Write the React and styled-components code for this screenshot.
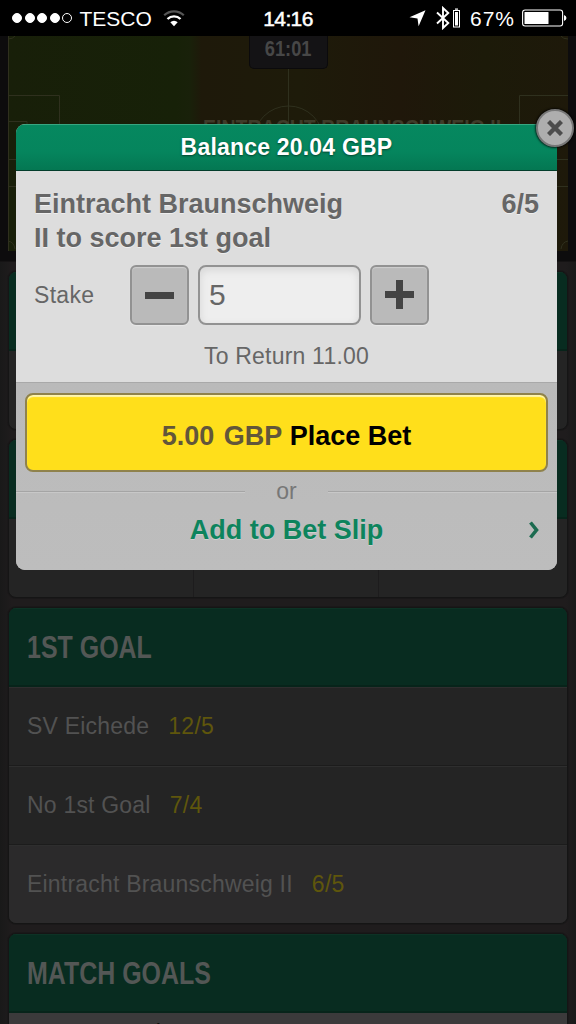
import React from 'react';
import styled, { createGlobalStyle } from 'styled-components';

const Global = createGlobalStyle`
  * { box-sizing: border-box; }
  html, body { margin: 0; padding: 0; background: #1e1c1d; }
  body { font-family: "Liberation Sans", Arial, sans-serif; }
  button, input { font: inherit; margin: 0; }
`;

const Screen = styled.main`
  position: relative;
  width: 576px;
  height: 1024px;
  overflow: hidden;
  background: linear-gradient(90deg, #191919 0, #1f1c1d 12px, #1f1c1d 566px, #191919 576px);
`;

const Label = styled.span`
  display: inline-block;
  white-space: pre;
  letter-spacing: ${p => p.$track || 0}px;
  transform: scaleX(${p => p.$narrow || 1});
  transform-origin: ${p => p.$origin || 'left'} center;
`;

/* ---------- status bar ---------- */

const StatusBar = styled.header`
  display: grid;
  grid-template-columns: 1fr auto 1fr;
  align-items: center;
  height: 36px;
  padding: 0 9px 0 12px;
  background: #000;
  color: #fff;
  font-size: 21px;
  line-height: 36px;
`;

const StatusGroup = styled.div`
  display: flex;
  align-items: center;
  justify-content: ${p => (p.$end ? 'flex-end' : 'flex-start')};
  height: 36px;
`;

const Signal = styled.div`
  display: flex;
  gap: 2.6px;
  margin-right: 7px;
`;

const Dot = styled.i`
  width: 10px;
  height: 10px;
  border-radius: 50%;
  border: 1px solid #fff;
  background: ${p => (p.$on ? '#fff' : 'transparent')};
`;

const Carrier = styled.span`
  padding-top: 2px;
  line-height: 34px;
`;

const Clock = styled.time`
  padding: 2px 3px 0 0;
  line-height: 34px;
  letter-spacing: -0.6px;
  -webkit-text-stroke: 0.5px #fff;
`;

const StatusIcon = styled.svg`
  display: block;
  flex: none;
  margin-left: ${p => p.$gap}px;
`;

const Percent = styled.span`
  margin-left: 10px;
  padding-top: 2px;
  line-height: 34px;
  letter-spacing: 1px;
`;

/* ---------- page behind the dialog ---------- */

const Pitch = styled.section`
  height: 226px;
  padding: 0 8px;
  background: #0d0c0d;
  border-bottom: 1px solid #151314;
`;

const PitchArt = styled.svg`
  display: block;
`;

const MatchClock = styled.div`
  position: absolute;
  top: 36px;
  left: 249px;
  width: 79px;
  height: 33px;
  border: 1px solid #0b0a0c;
  border-top: 0;
  border-radius: 0 0 5px 5px;
  background: #141315;
  color: #474747;
  font-size: 22px;
  font-weight: bold;
  line-height: 26px;
  text-align: center;
`;

const TeamName = styled.div`
  position: absolute;
  top: 115px;
  left: 203px;
  color: #3f3b29;
  font-size: 22px;
  font-weight: bold;
  line-height: 25px;
`;

const Markets = styled.div`
  display: flex;
  flex-direction: column;
  gap: 9px;
  padding: 9px 8px 0;
`;

const Market = styled.section`
  flex: none;
  height: ${p => p.$height}px;
  border: 1px solid #151515;
  border-radius: 8px;
  background: #242424;
  box-shadow: 0 0 0 1px #1a1819;
  overflow: hidden;
`;

const MarketHeader = styled.h2`
  height: 79px;
  margin: 0;
  padding: 0 18px;
  border-top: 1px solid #0d3225;
  border-bottom: 2px solid #07241a;
  background: #082c20;
  color: #535755;
  font-size: 32px;
  font-weight: bold;
  line-height: 77px;
`;

const Selection = styled.div`
  display: flex;
  align-items: center;
  gap: 19px;
  height: 79px;
  padding: 0 18px ${p => (p.$last ? 1 : 0)}px;
  border-top: 1px solid #2e2e2e;
  border-bottom: ${p => (p.$last ? 0 : 1)}px solid #1c1c1c;
  background: ${p => (p.$last ? '#2b2a2b' : '#242424')};
  color: #525252;
  font-size: 23px;
`;

const Odds = styled.span`
  color: #5f560c;
  letter-spacing: 0.3px;
`;

const Columns = styled.div`
  display: grid;
  grid-template-columns: 185px 185px 1fr;
  height: 79px;
`;

const Column = styled.div`
  border-right: 1px solid #1d1c1d;
`;

const GoalsRow = styled.div`
  height: 79px;
  padding: 7px 18px;
  background: #3b3a3b;
  color: #0f0f0f;
  font-size: 23px;
`;

/* ---------- bet dialog ---------- */

const Dialog = styled.div`
  position: absolute;
  top: 124px;
  left: 16px;
  width: 541px;
  height: 446px;
`;

const DialogFrame = styled.div`
  display: flex;
  flex-direction: column;
  height: 100%;
  border-radius: 9px;
  overflow: hidden;
  background: #bbb;
`;

const DialogTitle = styled.h1`
  height: 47px;
  margin: 0;
  border-top: 1px solid #38a681;
  border-bottom: 1px solid #033d2b;
  background: linear-gradient(#06885f 0%, #05855d 60%, #047752 100%);
  color: #fff;
  font-size: 23px;
  font-weight: bold;
  line-height: 44px;
  text-align: center;
  text-shadow: 0 1px 2px rgba(0, 40, 25, 0.7);
`;

const Close = styled.button`
  position: absolute;
  top: -15px;
  right: -17px;
  display: grid;
  place-items: center;
  width: 38px;
  height: 38px;
  padding: 0;
  border: 2px solid #777;
  border-radius: 50%;
  background: #aeaeae;
  box-shadow: 0 0 2px 1px rgba(0, 0, 0, 0.7);
`;

const BetBody = styled.section`
  height: 212px;
  padding: 16px 18px 0;
  background: #ddd;
  border-bottom: 1px solid #a9a9a9;
  color: #666;
`;

const Bet = styled.div`
  display: flex;
  justify-content: space-between;
  height: 78px;
  color: #666;
  font-size: 27px;
  font-weight: bold;
  line-height: 34px;
  text-shadow: 0 1px 0 #eee;
`;

const StakeRow = styled.div`
  display: flex;
  align-items: flex-start;
  gap: 9px;
  height: 60px;
  font-size: 23px;
`;

const StakeLabel = styled.label`
  width: 87px;
  line-height: 60px;
  letter-spacing: 0.3px;
`;

const Step = styled.button`
  display: grid;
  place-items: center;
  width: 59px;
  height: 60px;
  padding: 0;
  border: 2px solid #929292;
  border-radius: 6px;
  background: #bababa;
  box-shadow: inset 0 1px 1px #d0d0d0, 0 1px 1px #e8e8e8;
`;

const StakeInput = styled.input`
  width: 163px;
  height: 60px;
  padding: 0 9px 1px;
  border: 2px solid #929292;
  border-radius: 8px;
  outline: 0;
  background: #eee;
  box-shadow: inset 0 3px 8px rgba(0, 0, 0, 0.1);
  color: #666;
  font-size: 30px;
`;

const Returns = styled.p`
  margin: 17px 0 0;
  font-size: 23px;
  line-height: 28px;
  letter-spacing: 0.2px;
  text-align: center;
`;

const Actions = styled.section`
  flex: 1;
  display: flex;
  flex-direction: column;
  padding-top: 10px;
  background: linear-gradient(#bababa, #bdbdbd);
`;

const PlaceBet = styled.button`
  height: 79px;
  margin: 0 9px;
  padding: 7px 0 0;
  border: 2px solid #8f824c;
  border-radius: 8px;
  background: #ffdf1b;
  box-shadow: inset 0 2px 1px #fff6b0;
  color: #000;
  font-size: 27px;
  font-weight: bold;
  white-space: pre;
`;

const Amount = styled.span`
  color: #62563a;
  word-spacing: 2px;
`;

const Divider = styled.div`
  display: grid;
  grid-template-columns: 229px 1fr 229px;
  align-items: center;
  height: 39px;
  color: #777;
  font-size: 23px;
  text-align: center;
`;

const Line = styled.hr`
  width: 100%;
  margin: 0;
  border: 0;
  border-top: 1px solid #a5a5a5;
  border-bottom: 1px solid #c8c8c8;
`;

const AddToSlip = styled.a`
  display: grid;
  grid-template-columns: 40px 1fr 40px;
  align-items: center;
  height: 38px;
  color: #0d845d;
  font-size: 27px;
  font-weight: bold;
  text-align: center;
  text-shadow: 0 1px 0 #d0d0d0;
`;

const SlipArrow = styled.svg`
  display: block;
  margin-left: 12px;
`;

const PitchDrawing = () => (
  <PitchArt width="560" height="215" viewBox="8 36 560 215">
    <defs>
      <linearGradient id="turf" x1="0" x2="1">
        <stop offset="0" stopColor="#181f09" />
        <stop offset="0.3" stopColor="#172108" />
        <stop offset="0.325" stopColor="#19210a" />
        <stop offset="0.345" stopColor="#1e190a" />
        <stop offset="0.52" stopColor="#1e1b0a" />
        <stop offset="0.7" stopColor="#1f170a" />
        <stop offset="0.85" stopColor="#1c1a09" />
        <stop offset="1" stopColor="#1e190a" />
      </linearGradient>
    </defs>
    <rect x="8" y="36" width="560" height="215" fill="url(#turf)" />
    <g fill="none" stroke="#2f301e" strokeWidth="1">
      <path d="M8.500 36V251M8 95.500H59.500V186.500H8M8 121.500H27V159.500H8M8 39q5 0 7-3M8 241q6 1 7 8" />
      <path d="M288.500 68V251M568 95.500H519.500V186.500H568M568 121.500H549V159.500H568M568 241q-6 1-7 8M561 36q2 3 7 3" />
      <circle cx="288.500" cy="141" r="35" />
    </g>
  </PitchArt>
);

const selections = [
  { name: 'SV Eichede', odds: '12/5', track: 0.2 },
  { name: 'No 1st Goal', odds: '7/4', track: 0.2 },
  { name: 'Eintracht Braunschweig II', odds: '6/5', track: 0.2 },
];

export default function App() {
  return (
    <Screen>
      <Global />
      <StatusBar>
        <StatusGroup>
          <Signal>
            {[1, 1, 1, 1, 0].map((on, i) => <Dot key={i} $on={on} />)}
          </Signal>
          <Carrier>TESCO</Carrier>
          <StatusIcon $gap={11} width="22" height="17" viewBox="0 0 22 17" fill="none">
            <path d="M1.200 5.300a14 14 0 0 1 19.600 0" stroke="#555" strokeWidth="2.200" />
            <path d="M4.500 9a9.300 9.300 0 0 1 13 0" stroke="#fff" strokeWidth="2.400" />
            <path d="M7.300 12.300a5.200 5.200 0 0 1 7.400 0L11 16.200z" fill="#fff" />
          </StatusIcon>
        </StatusGroup>
        <Clock>14:16</Clock>
        <StatusGroup $end>
          <StatusIcon $gap={0} width="17" height="17" viewBox="0 0 17 17" fill="#fff">
            <path d="M16.500 .3 9.600 16.200 8.500 8.600.5 7.200z" />
          </StatusIcon>
          <StatusIcon $gap={10} width="14" height="24" viewBox="0 0 14 24" fill="none" stroke="#fff" strokeWidth="1.900">
            <path d="M1 6.500 12.300 17 7 22V2l5.300 5L1 17.500" />
          </StatusIcon>
          <StatusIcon $gap={3} width="7" height="20" viewBox="0 0 7 20" fill="#fff">
            <path d="M2 .5h3v1.200H2z" />
            <rect x=".5" y="2.500" width="6" height="16.500" fill="none" stroke="#fff" />
            <rect x="2" y="4" width="3" height="13.500" />
          </StatusIcon>
          <Percent>67%</Percent>
          <StatusIcon $gap={7} width="45" height="18" viewBox="0 0 45 18">
            <rect x=".6" y="1" width="40" height="16" rx="2.500" fill="none" stroke="#fff" strokeWidth="1.100" />
            <rect x="2.500" y="3" width="24" height="12" rx=".5" fill="#fff" />
            <path d="M42 6q2.500 .8 2.500 3T42 12z" fill="#fff" />
          </StatusIcon>
        </StatusGroup>
      </StatusBar>

      <Pitch>
        <PitchDrawing />
        <MatchClock><Label $narrow={0.83} $origin="center">61:01</Label></MatchClock>
        <TeamName><Label $narrow={0.887}>EINTRACHT BRAUNSCHWEIG II</Label></TeamName>
      </Pitch>

      <Markets>
        <Market $height={159}><MarketHeader /></Market>
        <Market $height={159}>
          <MarketHeader />
          <Columns><Column /><Column /><div /></Columns>
        </Market>
        <Market $height={317}>
          <MarketHeader><Label $narrow={0.78}>1ST GOAL</Label></MarketHeader>
          {selections.map((s, i) => (
            <Selection key={s.name} $last={i === selections.length - 1}>
              <Label $track={s.track}>{s.name}</Label>
              <Odds>{s.odds}</Odds>
            </Selection>
          ))}
        </Market>
        <Market $height={158}>
          <MarketHeader><Label $narrow={0.78}>MATCH GOALS</Label></MarketHeader>
          <GoalsRow><Label $track={0.2}>Current Goals</Label></GoalsRow>
        </Market>
      </Markets>

      <Dialog role="dialog">
        <DialogFrame>
          <DialogTitle><Label $track={0.2}>Balance 20.04 GBP</Label></DialogTitle>
          <BetBody>
            <Bet>
              <Label>{'Eintracht Braunschweig\nII to score 1st goal'}</Label>
              <Label>6/5</Label>
            </Bet>
            <StakeRow>
              <StakeLabel htmlFor="stake">Stake</StakeLabel>
              <Step aria-label="Decrease stake">
                <svg width="29" height="30"><path d="M0 12h29v7H0z" fill="#444" /></svg>
              </Step>
              <StakeInput id="stake" defaultValue="5" />
              <Step aria-label="Increase stake">
                <svg width="29" height="30"><path d="M11 0h7v11h11v7H18v11h-7V18H0v-7h11z" fill="#444" /></svg>
              </Step>
            </StakeRow>
            <Returns>To Return 11.00</Returns>
          </BetBody>
          <Actions>
            <PlaceBet><Amount>5.00 GBP</Amount> Place Bet</PlaceBet>
            <Divider><Line /><span>or</span><Line /></Divider>
            <AddToSlip>
              <span />
              <Label $origin="center">Add to Bet Slip</Label>
              <SlipArrow width="11" height="18" viewBox="0 0 11 18" fill="none" stroke="#1c6b50" strokeWidth="3.600">
                <path d="M1.500 1.500 7.500 9l-6 7.500" />
              </SlipArrow>
            </AddToSlip>
          </Actions>
        </DialogFrame>
        <Close aria-label="Close">
          <svg width="16" height="16" stroke="#4d4d4d" strokeWidth="4.400"><path d="M1.500 1.500l13 13M14.500 1.500l-13 13" /></svg>
        </Close>
      </Dialog>
    </Screen>
  );
}
